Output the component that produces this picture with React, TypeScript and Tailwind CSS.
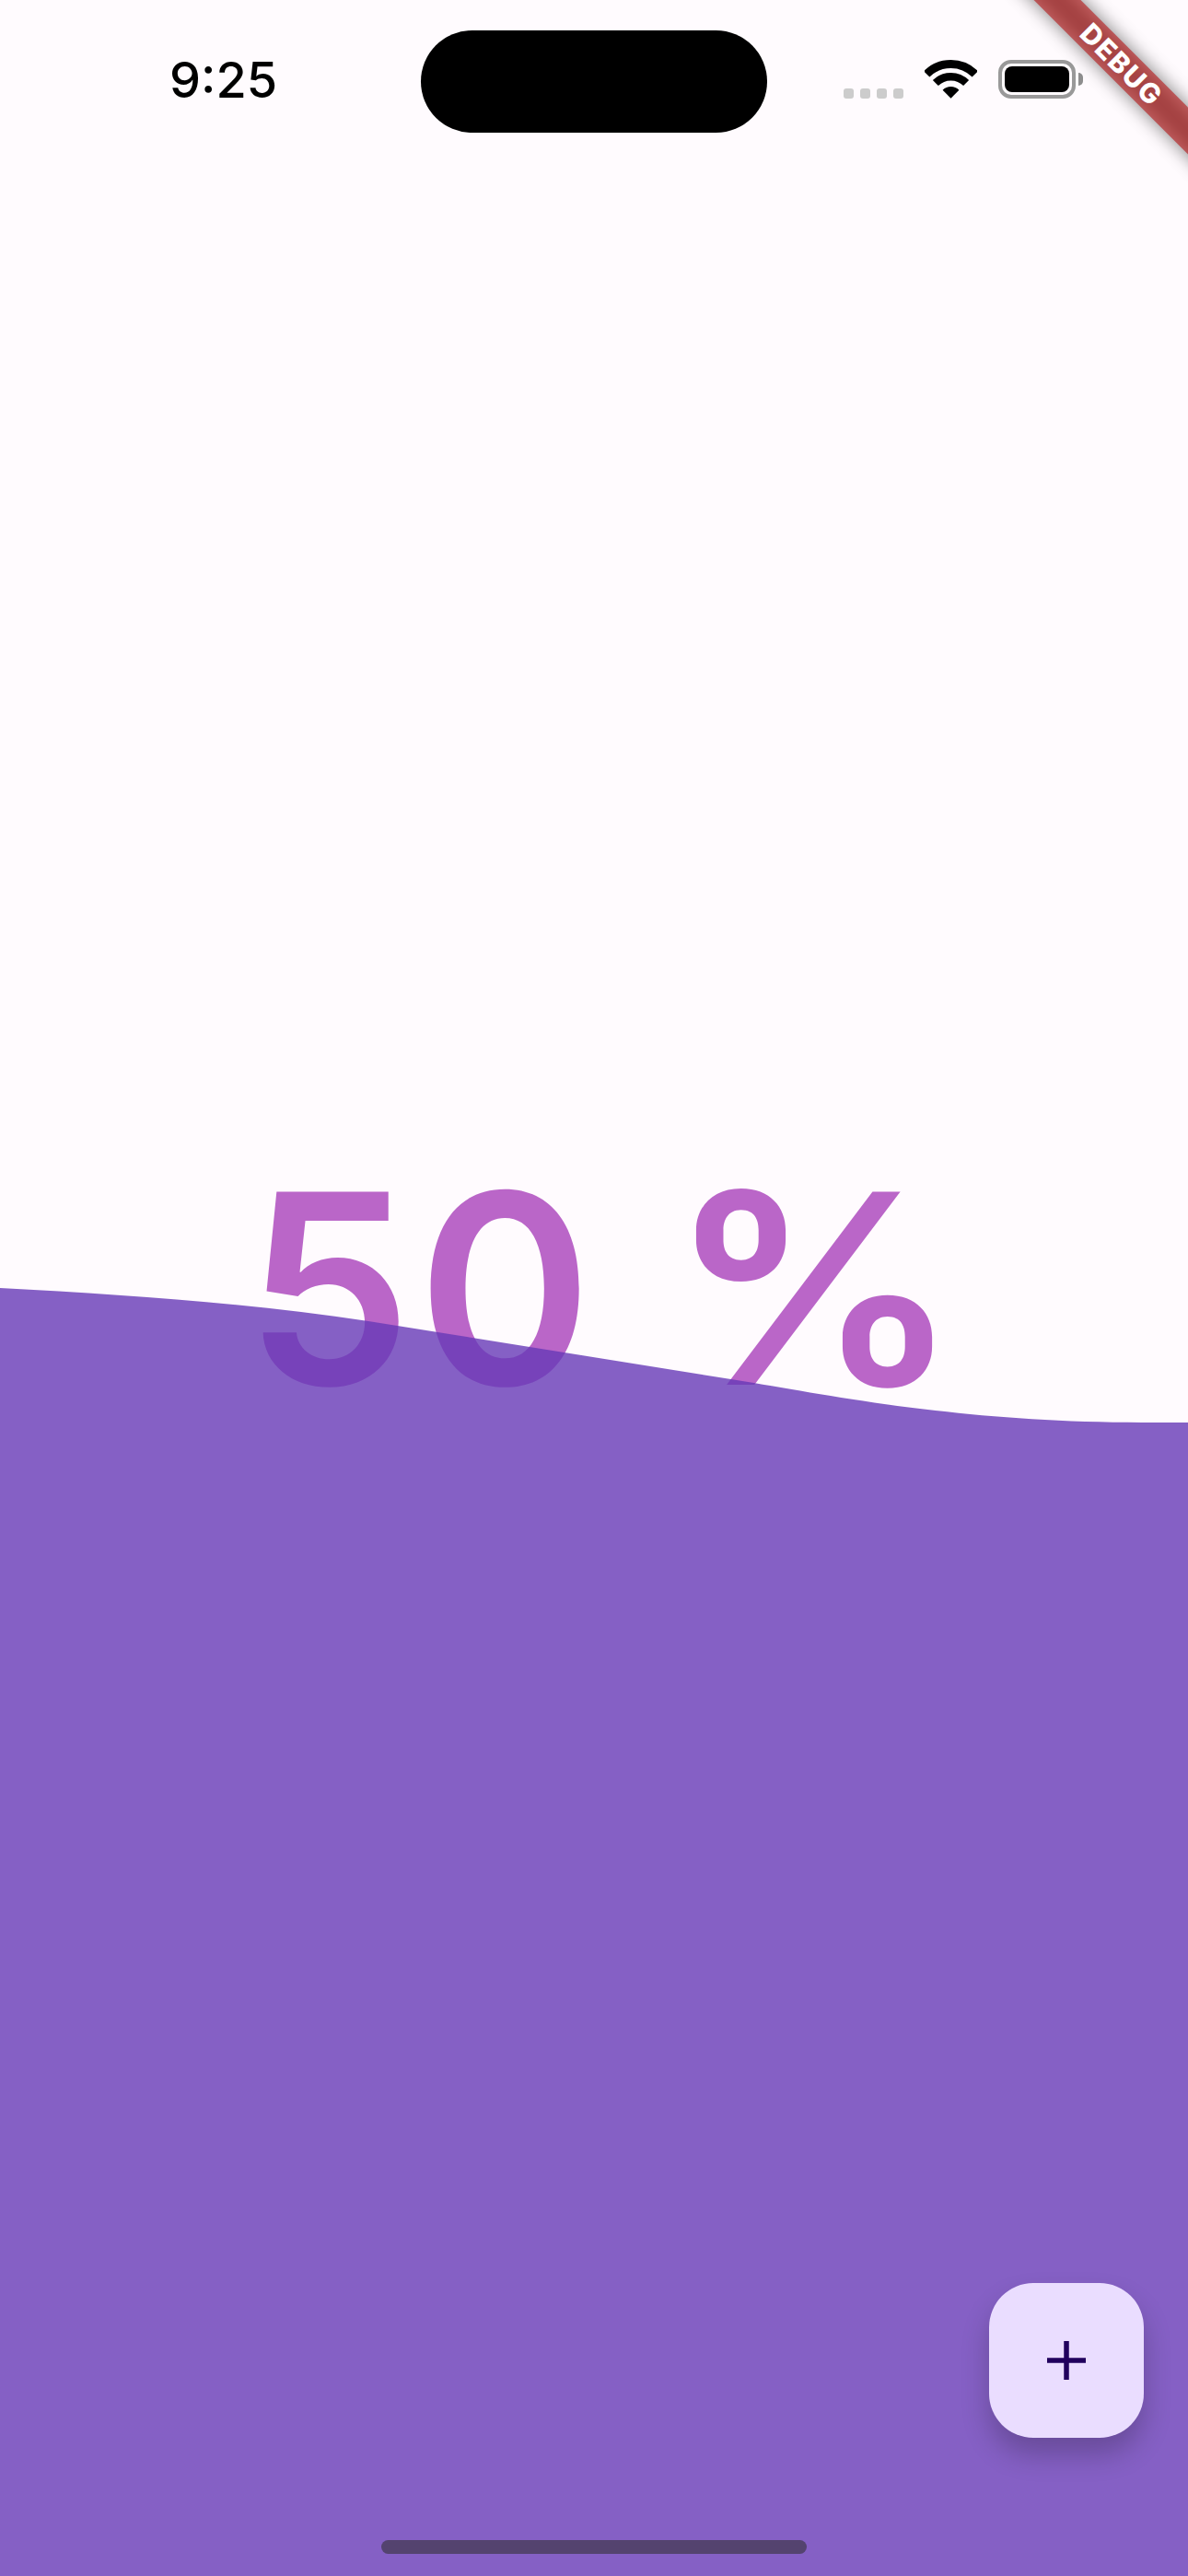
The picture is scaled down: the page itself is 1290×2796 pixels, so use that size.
const arc = (r: number) => {
  const d = r * Math.SQRT1_2;
  return `M${28.5 - d} ${41.7 - d}A${r} ${r} 0 0 1 ${28.5 + d} ${41.7 - d}`;
};

const WifiIcon = () => (
  <svg width="57" height="42" viewBox="0 0 57 42" className="block">
    <path d={arc(37.2)} fill="none" stroke="#000" strokeWidth="9" />
    <path d={arc(23.5)} fill="none" stroke="#000" strokeWidth="8.5" />
    <path d="M28.5 41.7L19.6 32.8A12.6 12.6 0 0 1 37.4 32.8Z" fill="#000" />
  </svg>
);

const StatusBar = () => (
  <div className="relative flex h-[144px] items-start">
    <span className="ml-[184px] mt-[60px] w-[116px] text-[54px] leading-[54px] font-medium text-black">
      9:25
    </span>
    <div className="ml-[157px] mt-[33px] h-[111px] w-[376px] rounded-full bg-black" />
    <div className="ml-[83px] mt-[96px] flex gap-[7px]">
      {[0, 1, 2, 3].map((i) => (
        <div key={i} className="h-[11px] w-[11px] rounded-[3px] bg-[#cccccc]" />
      ))}
    </div>
    <div className="ml-[23px] mt-[65px]">
      <WifiIcon />
    </div>
    <div className="ml-[23px] mt-[65px] flex items-center">
      <div className="h-[42px] w-[84px] rounded-[14px] border-[4px] border-[#999999] p-[3px]">
        <div className="h-full w-full rounded-[8px] bg-black" />
      </div>
      <div className="ml-[3px] h-[14px] w-[5px] rounded-r-full bg-[#8e8e8e]" />
    </div>
  </div>
);

const DebugBanner = () => (
  <div className="absolute left-[1018px] top-[52px] h-[36px] w-[400px] rotate-45">
    <div className="absolute inset-0 bg-black/50 blur-[10px]" />
    <div className="absolute inset-0 flex items-center justify-center bg-[#b71c1c]/[.63] text-[30px] leading-[36px] font-extrabold tracking-[1.5px] text-white">
      DEBUG
    </div>
  </div>
);

export default function App() {
  return (
    <div className="relative h-[2796px] w-[1290px] overflow-hidden bg-[#fffbfe] font-['Inter',sans-serif]">
      <StatusBar />

      <div className="absolute inset-0 flex items-center justify-center">
        <span className="pr-[4px] text-[288px] leading-none font-semibold tracking-[6px] whitespace-pre text-[#9c27b0]/70">
          50 <span className="-ml-[3px] inline-block origin-left scale-x-[1.1]">%</span>
        </span>
      </div>

      <svg
        className="absolute inset-0"
        width="1290"
        height="2796"
        viewBox="0 0 1290 2796"
      >
        <path
          d="M0 1398C133 1405 267 1414 400 1434C533 1455 667 1477 800 1498C900 1514 1040 1544 1240 1544L1290 1544L1290 2796L0 2796Z"
          fill="#673ab7"
          fillOpacity="0.8"
        />
      </svg>

      <DebugBanner />

      <button className="absolute bottom-[150px] right-[48px] flex h-[168px] w-[168px] items-center justify-center rounded-[48px] bg-[#eaddff] shadow-[0_18px_30px_rgba(0,0,0,0.22)]">
        <svg width="42" height="42" viewBox="0 0 42 42" className="block">
          <path d="M21 0V42M0 21H42" stroke="#21005d" strokeWidth="5.5" fill="none" />
        </svg>
      </button>

      <div className="absolute bottom-[24px] left-[414px] h-[15px] w-[462px] rounded-full bg-[#54436f]" />
    </div>
  );
}
